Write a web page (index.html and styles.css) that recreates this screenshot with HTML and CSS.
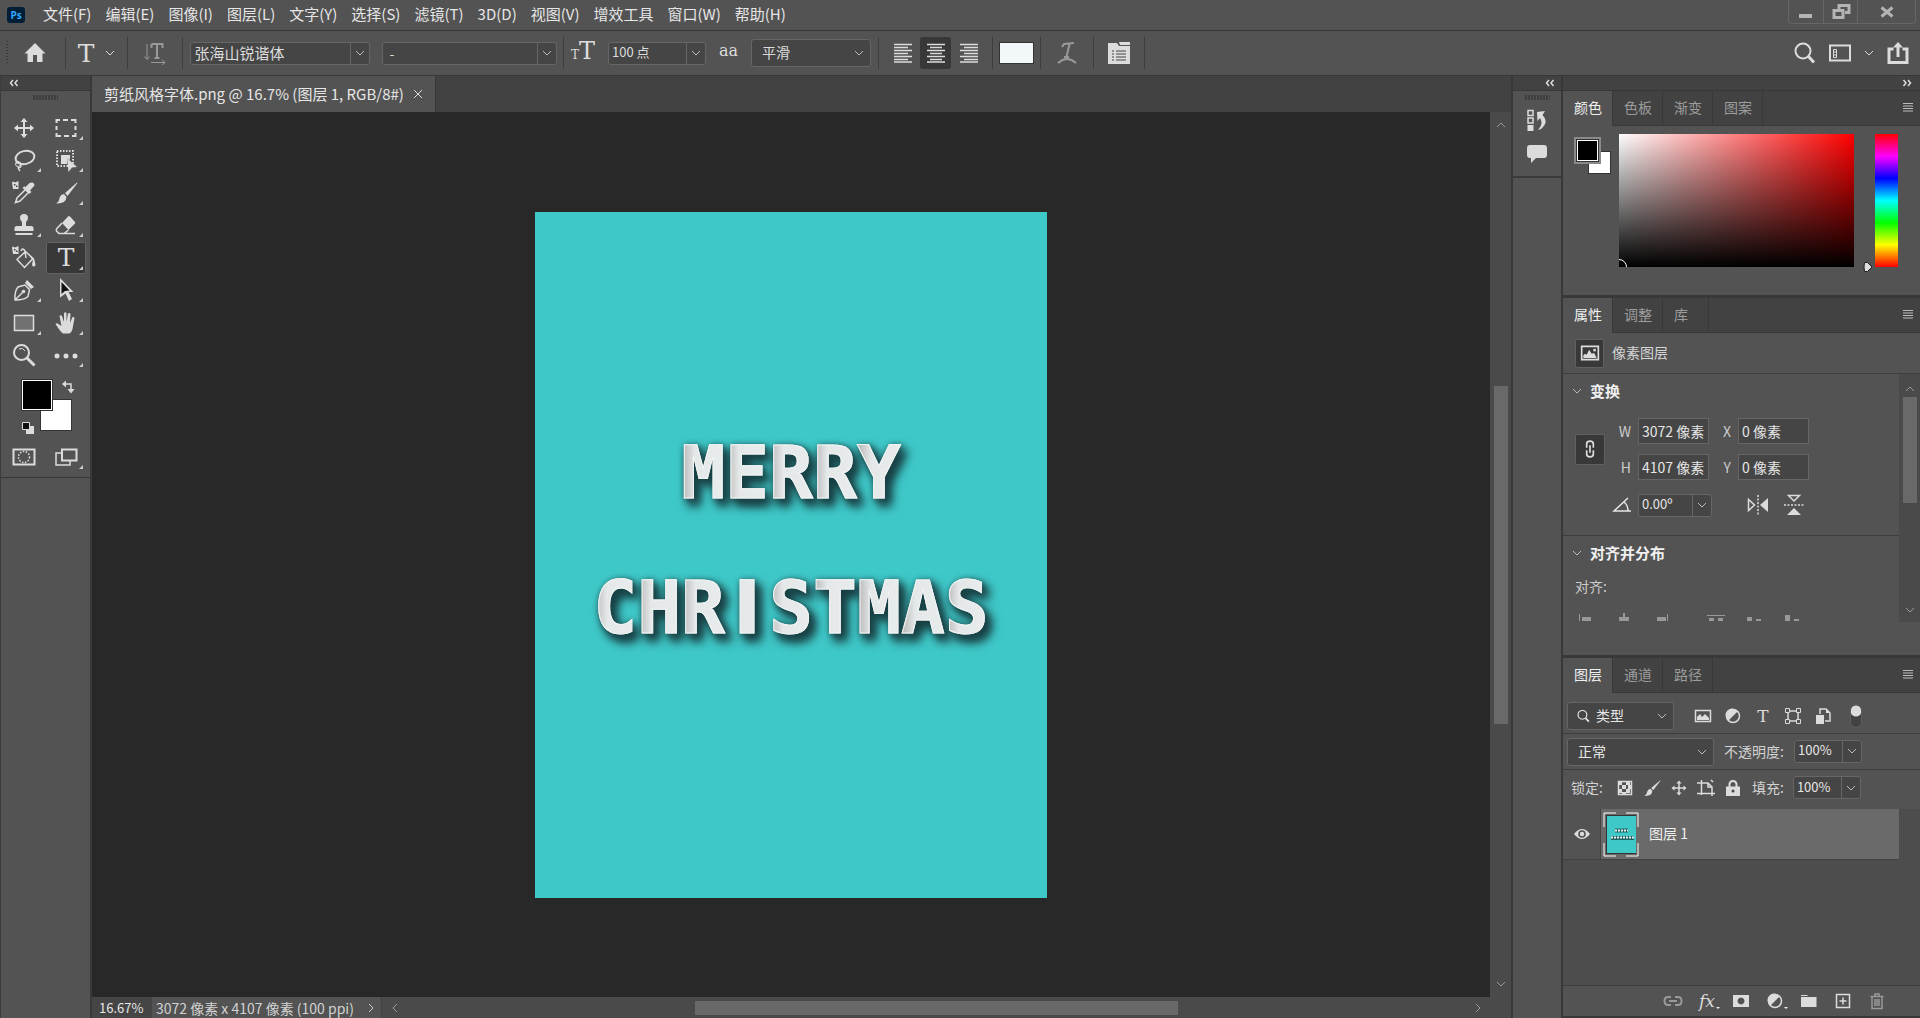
FILE: index.html
```html
<!DOCTYPE html>
<html lang="zh-CN">
<head>
  <meta charset="UTF-8"/>
  <meta name="viewport" content="width=device-width,initial-scale=1.0"/>
  <title>剪纸风格字体.png</title>
  <link rel="stylesheet" href="styles.css">
</head>
<body>
<svg class="sprite" aria-hidden="true">
  <symbol id="i-down" viewBox="0 0 10 10"><path d="M1 3l4 4 4-4" class="ln"/></symbol>
  <symbol id="i-up" viewBox="0 0 10 10"><path d="M1 7l4-4 4 4" class="ln"/></symbol>
  <symbol id="i-left" viewBox="0 0 10 10"><path d="M7 1L3 5l4 4" class="ln"/></symbol>
  <symbol id="i-right" viewBox="0 0 10 10"><path d="M3 1l4 4-4 4" class="ln"/></symbol>
  <symbol id="i-collapse" viewBox="0 0 10 10"><path d="M4 2L1.500 5 4 8M8.500 2L6 5l2.500 3" class="ln ln-bold"/></symbol>
  <symbol id="i-expand" viewBox="0 0 10 10"><path d="M1.500 2L4 5 1.500 8M6 2l2.500 3L6 8" class="ln ln-bold"/></symbol>
  <symbol id="i-close" viewBox="0 0 10 10"><path d="M1 1l8 8M9 1L1 9" class="ln"/></symbol>
  <symbol id="i-menu" viewBox="0 0 10 10"><path d="M0 1.500h10M0 4h10M0 6.500h10M0 9h10" class="ln"/></symbol>
  <symbol id="i-home" viewBox="0 0 24 24"><path d="M12 2L1.500 12.500H4.500V21h5.500v-7h4v7h5.500v-8.500h3z"/></symbol>
  <symbol id="i-orient" viewBox="0 0 24 24"><path d="M4 3v15M1.500 15.500L4 18.500l2.500-3M8 21.500h14M19 18.500l3 3-3 2.500" class="ln"/><path d="M8.500 3h11v4M8.500 7V3M14 3v14M11.500 17h5" class="ln ln-2"/></symbol>
  <symbol id="i-al-l" viewBox="0 0 20 20"><path d="M1 1.500h18M1 4.500h14M1 7.500h18M1 10.500h14M1 13.500h18M1 16.500h14M1 19h18" class="ln ln-bold"/></symbol>
  <symbol id="i-al-c" viewBox="0 0 20 20"><path d="M1 1.500h18M4 4.500h12M1 7.500h18M4 10.500h12M1 13.500h18M4 16.500h12M1 19h18" class="ln ln-bold"/></symbol>
  <symbol id="i-al-r" viewBox="0 0 20 20"><path d="M1 1.500h18M5 4.500h14M1 7.500h18M5 10.500h14M1 13.500h18M5 16.500h14M1 19h18" class="ln ln-bold"/></symbol>
  <symbol id="i-warp" viewBox="0 0 24 24"><path d="M7 6l2-3 10-1M14.500 3l-3 13M9 16h5" class="ln ln-2"/><path d="M3 22q9-8 18 0" class="ln ln-2"/></symbol>
  <symbol id="i-panel" viewBox="0 0 24 24"><path d="M1 2h9l2 3h11v18H1zM12 1h11v3H13z"/><path d="M5 10h2M9 10h10M5 13h2M9 13h10M5 16h2M9 16h10M5 19h2M9 19h10" stroke="#444" fill="none"/></symbol>
  <symbol id="i-search" viewBox="0 0 24 24"><circle cx="11" cy="10" r="7.500" class="ln ln-2"/><path d="M16.500 15.500l5.500 6" class="ln ln-3"/></symbol>
  <symbol id="i-work" viewBox="0 0 24 24"><path d="M2 4.500h20v15H2z" class="ln ln-2"/><path d="M5.500 8.500h3v8h-3zM5.500 11h3M5.500 14h3" class="ln"/></symbol>
  <symbol id="i-share" viewBox="0 0 24 24"><path d="M7.500 8H3v13.500h18V8h-4.500" class="ln ln-3"/><path d="M12 16V4" class="ln ln-3"/><path d="M7 6.500L12 1l5 5.500z"/></symbol>

  <symbol id="i-move" viewBox="0 0 24 24"><path d="M12 4v16M4 12h16" class="ln ln-2"/><path d="M12 2l3.500 4h-7zM12 22l3.500-4h-7zM2 12l4-3.500v7zM22 12l-4-3.500v7z"/></symbol>
  <symbol id="i-marquee" viewBox="0 0 24 24"><path d="M2.500 7V4H6M9 4h5M17 4h4.500v3M21.500 10v4M21.500 17v3H18M15 20h-5M7 20H2.500v-3M2.500 14v-4" class="ln ln-2"/></symbol>
  <symbol id="i-lasso" viewBox="0 0 24 24"><ellipse cx="13" cy="9.500" rx="9.500" ry="6.500" transform="rotate(-12 13 9.500)" class="ln ln-2"/><circle cx="6" cy="16" r="2.500" class="ln"/><path d="M4 15q5-1 5 2t-2 2.500 1 3.500" class="ln ln-bold"/></symbol>
  <symbol id="i-object" viewBox="0 0 24 24"><path d="M3 3h16v15H3z" class="ln ln-2" stroke-dasharray="1.500 1.500"/><path d="M7 7h9v5l-3-2v6H7zM13 10l10 9-5 .5L14.500 24z"/></symbol>
  <symbol id="i-dropper" viewBox="0 0 24 24"><path d="M13 6.500L17.500 2q4.500-2 5 2.500L18 9.500l1.500 1.500-2.500 2L10.500 7l2-2z"/><path d="M13 9l-8 8-1.500 4.500L8 20l8-8" class="ln ln-bold"/><path d="M0 1.500l1-1 2 1 3.500-1.500v8H1z"/><path d="M2 3h1.500v1.500H2zM4 4.500h1.500V6H4z" fill="#444"/></symbol>
  <symbol id="i-brush" viewBox="0 0 24 24"><path d="M23 1.500L11 12l2.500 3L23.500 2zM10 13l2.500 3q-.5 7-10.500 6.500 3-1.500 3.500-5.500 1-3.500 4.500-4z"/></symbol>
  <symbol id="i-stamp" viewBox="0 0 24 24"><path d="M12 1a4 4 0 0 1 4 4q0 2-2 4v4h5q2.500 0 2.500 2v3h-19v-3q0-2 2.500-2h5V9Q8 7 8 5a4 4 0 0 1 4-4zM3.500 20h17v2h-17z"/></symbol>
  <symbol id="i-eraser" viewBox="0 0 24 24"><path d="M14 3.500q1-1 2 0L21 9q.5 1 0 1.500L14.500 17 8 10z"/><path d="M8 10l-5.500 6q-.5 1 0 2l2.500 2.500h5L14.500 17M10 20.500h11" class="ln ln-bold"/></symbol>
  <symbol id="i-bucket" viewBox="0 0 24 24"><path d="M5 13.500l8.500-8 7.500 7-8.500 9zM9 5q1.500-4 4 0l1 7" class="ln ln-bold"/><path d="M17 9q6 2 6.500 10-1 2.500-3 1-1-2 .5-5zM0 1.500l1-1 2 1 3.500-1.500v8H1z"/><path d="M2 3h1.500v1.500H2zM4 4.500h1.500V6H4z" fill="#444"/></symbol>
  <symbol id="i-pen" viewBox="0 0 24 24"><path d="M3 22q-.5-9 3-13l7-2 4.500 4.500-1.500 7Q12.500 22 3 22zM3.500 21.500l7-7" class="ln ln-bold"/><circle cx="11.500" cy="13.500" r="1.800"/><path d="M15 2l7 7-3 2-6-6z"/></symbol>
  <symbol id="i-select" viewBox="0 0 24 24"><path d="M6 0l13.500 14h-5l3.500 7-3 2-3.500-7.500-5.500 4z"/><path d="M7.500 4l8 8.500-4.500.5-3.500 3z" fill="#111"/></symbol>
  <symbol id="i-rect" viewBox="0 0 24 24"><path d="M2.500 4.500h19v15h-19z" fill="#717171" stroke="currentColor" stroke-width="1.500"/></symbol>
  <symbol id="i-hand" viewBox="0 0 24 24"><path d="M9 22.500q-2-1-7.500-9.500 1-1.500 3 0l3 2L5.500 5Q7 3.500 8 5l2 6V2q1.500-1.500 2.500 0v9L14 2.500q1.500-1 2.500 .5l-.5 9 2.500-6q1.500-.5 2 1L18.500 18q-1 3.500-3 4.500z"/></symbol>
  <symbol id="i-zoom" viewBox="0 0 24 24"><circle cx="9.500" cy="9.500" r="7.500" class="ln ln-2"/><path d="M15 15l7.500 7.500" class="ln ln-3"/><path d="M7 6q4-2 6 2" class="ln"/></symbol>
  <symbol id="i-more" viewBox="0 0 24 24"><circle cx="3" cy="13" r="2.500"/><circle cx="12" cy="13" r="2.500"/><circle cx="21" cy="13" r="2.500"/></symbol>
  <symbol id="i-swap" viewBox="0 0 14 14"><path d="M4 4h6v6" class="ln ln-bold"/><path d="M1 4l4-3.500v7zM10 13.500L6.500 9h7z"/></symbol>
  <symbol id="i-default" viewBox="0 0 14 14"><path d="M6 5h7v8H5V9h1z"/><path d="M1.500 1.500h7v7h-7z" fill="#111" stroke="currentColor"/></symbol>
  <symbol id="i-mask" viewBox="0 0 24 24"><path d="M1.500 4.500h21v15h-21z" class="ln ln-2"/><circle cx="12" cy="12" r="5.500" class="ln ln-bold" stroke-dasharray="1.500 1.500"/></symbol>
  <symbol id="i-screen" viewBox="0 0 24 24"><path d="M8 8H2v12h14v-4" class="ln ln-bold"/><path d="M8 4.500h14.500v11H8z" class="ln ln-2"/></symbol>

  <symbol id="i-history" viewBox="0 0 24 24"><path d="M3 1.500h5v5H3zM3 9h5v5H3z" class="ln ln-bold"/><path d="M2.500 16h6v6h-6zM12 3l8-1-2.500 4q7 7-1.500 14l-3 1q6-6 2-12l-2.500 3z"/></symbol>
  <symbol id="i-comment" viewBox="0 0 24 24"><path d="M5 3h14q3 0 3 3v7q0 3-3 3h-8l-5 5v-5H5q-3 0-3-3V6q0-3 3-3z"/></symbol>
  <symbol id="i-image" viewBox="0 0 24 24"><path d="M2 4h20v16H2z" class="ln ln-2"/><path d="M4 18v-3l2-2 2 1 3-6 3 5 3-1 3 6z"/><path d="M16 7h3v3h-3z"/></symbol>
  <symbol id="i-link" viewBox="0 0 24 24"><path d="M9 9.500H8V6q0-3.500 4-3.500T16 6v3.500h-1M9 14.500H8V18q0 3.500 4 3.500t4-3.500v-3.500h-1M12 7.500v9" class="ln ln-2"/></symbol>
  <symbol id="i-angle" viewBox="0 0 20 16"><path d="M16 1L2 14h17M12 5q4 3 4 9" class="ln ln-bold"/></symbol>
  <symbol id="i-fliph" viewBox="0 0 24 24"><path d="M2.500 6.500v11l6-5.500z" class="ln ln-bold"/><path d="M22 5v14l-8-7z"/><path d="M12 2v20" class="ln ln-bold" stroke-dasharray="2 1.500"/></symbol>
  <symbol id="i-flipv" viewBox="0 0 24 24"><path d="M6.500 2.500h11L12 8z" class="ln ln-bold"/><path d="M5 22h14l-7-7z"/><path d="M2 12h20" class="ln ln-bold" stroke-dasharray="2 1.500"/></symbol>
  <symbol id="i-obj-l" viewBox="0 0 18 8"><path d="M2 1h1v7H2zM5 4h9v4H5z"/></symbol>
  <symbol id="i-obj-c" viewBox="0 0 18 8"><path d="M8 0h2v4h4v4H4V4h4z"/></symbol>
  <symbol id="i-obj-r" viewBox="0 0 18 8"><path d="M14 1h1v7h-1zM4 4h9v4H4z"/></symbol>
  <symbol id="i-obj-t" viewBox="0 0 18 8"><path d="M0 2h18v1H0zM2 5h5v3H2zM11 5h5v3h-5z"/></symbol>
  <symbol id="i-obj-m" viewBox="0 0 18 8"><path d="M2 4h5v4H2zM11 6h5v2h-5z"/></symbol>
  <symbol id="i-obj-b" viewBox="0 0 18 8"><path d="M2 2h5v6H2zM11 6h5v2h-5z"/></symbol>
  <symbol id="i-pic" viewBox="0 0 18 18"><path d="M1.500 3.500h15v11h-15z" class="ln ln-bold"/><path d="M3 13v-3l3-3 2 3 3-3 4 4v2z"/></symbol>
  <symbol id="i-adjust" viewBox="0 0 18 18"><circle cx="9" cy="9" r="6.500" class="ln ln-bold"/><path d="M13.500 4.500A6.500 6.500 0 1 0 4.500 13.500z"/></symbol>
  <symbol id="i-shape" viewBox="0 0 18 18"><path d="M4 4h10v10H4z" class="ln ln-bold"/><path d="M1.500 1.500h4v4h-4zM12.500 1.500h4v4h-4zM1.500 12.500h4v4h-4zM12.500 12.500h4v4h-4z" fill="#535353" stroke="currentColor"/></symbol>
  <symbol id="i-smart" viewBox="0 0 18 18"><path d="M6 7V2h6l4 4v8h-5" class="ln ln-bold"/><path d="M12 2v4h4zM2 8h8v9H2z"/></symbol>
  <symbol id="i-checker" viewBox="0 0 18 18"><path d="M2.500 2.500h13v13h-13z" class="ln ln-bold"/><path d="M2 2h4v4H2zM10 2h4v4h-4zM6 6h4v4H6zM12 6h4v4h-4zM2 10h4v4H2zM10 10h4v4h-4zM6 13h4v3H6z"/></symbol>
  <symbol id="i-artboard" viewBox="0 0 18 18"><path d="M4.500 1v15M0 4h11l4 4v9M0 14.500h18M11 4v4h4M14 1l2 2" class="ln ln-bold"/></symbol>
  <symbol id="i-lock" viewBox="0 0 18 18"><path d="M5.500 8V5Q6 2 9 2t3.500 3v3" class="ln ln-2"/><path d="M2 7.500h14V17H2z"/><circle cx="9" cy="12" r="1.500" fill="#444"/></symbol>
  <symbol id="i-eye" viewBox="0 0 18 18"><path d="M1 9q8-10 16 0-8 10-16 0z"/><circle cx="9" cy="9" r="3.800" fill="#535353"/><circle cx="9" cy="9" r="2.200"/></symbol>
  <symbol id="i-chain" viewBox="0 0 20 18"><path d="M8 5H5q-3.500 0-3.500 4T5 13h3M12 5h3q3.500 0 3.500 4T15 13h-3M6 9h8" class="ln ln-2"/></symbol>
  <symbol id="i-addmask" viewBox="0 0 20 18"><path fill-rule="evenodd" d="M2 3h16v12H2zM10 5.500a3.500 3.500 0 1 0 .01 0z"/></symbol>
  <symbol id="i-folder" viewBox="0 0 20 18"><path d="M2 3h6l1 1H2zM2 5h15.500v10H2z"/></symbol>
  <symbol id="i-new" viewBox="0 0 20 18"><path d="M3.500 2.500h13v13h-13zM10 5.500v7M6.500 9h7" class="ln ln-bold"/></symbol>
  <symbol id="i-trash" viewBox="0 0 20 18"><path d="M3.500 4.500h13M5 5v11.500h10V5M8 4V2h4v2M8 7v7M10 7v7M12 7v7" class="ln ln-bold"/></symbol>
</svg>

<div class="app">
  <header class="menubar">
    <span class="logo">Ps</span>
    <nav class="menus">
      <button>文件(F)</button>
      <button>编辑(E)</button>
      <button>图像(I)</button>
      <button>图层(L)</button>
      <button>文字(Y)</button>
      <button>选择(S)</button>
      <button>滤镜(T)</button>
      <button>3D(D)</button>
      <button>视图(V)</button>
      <button>增效工具</button>
      <button>窗口(W)</button>
      <button>帮助(H)</button>
    </nav>
    <div class="winbtns">
      <button class="wb" aria-label="最小化"><svg viewBox="0 0 20 20"><path d="M3 12h13v4H3z"/></svg></button>
      <button class="wb" aria-label="还原"><svg viewBox="0 0 20 20"><path d="M8 7V3.500h10v7h-4M3 8.500h9v7H3z" class="ln ln-3"/></svg></button>
      <button class="wb wb-close" aria-label="关闭"><svg viewBox="0 0 20 20"><path d="M4.500 5.500l11 9M15.500 5.500l-11 9" class="ln ln-3"/></svg></button>
    </div>
  </header>

  <div class="options">
    <div class="grip-v"></div>
    <div class="og og-home"><button class="ib" aria-label="主页"><svg class="s24"><use href="#i-home"/></svg></button></div>
    <div class="og og-tool"><button class="ib glyph" aria-label="横排文字工具">T</button><button class="ib" aria-label="工具预设"><svg class="s10"><use href="#i-down"/></svg></button></div>
    <div class="og og-orient"><button class="ib off" aria-label="切换文本取向"><svg class="s24"><use href="#i-orient"/></svg></button></div>
    <div class="og og-font">
      <select class="sel sel-split sel-font" aria-label="字体"><option>张海山锐谐体</option></select>
      <select class="sel sel-split sel-style" aria-label="字体样式"><option>-</option></select>
    </div>
    <div class="og og-size">
      <span class="pair pair-size"><span>T</span><span>T</span></span>
      <div class="combo combo-size"><input value="100 点" aria-label="字体大小"><button aria-label="选择字体大小"><svg class="s10"><use href="#i-down"/></svg></button></div>
      <span class="pair pair-aa"><span>a</span><span>a</span></span>
      <select class="sel sel-tall sel-aa" aria-label="消除锯齿"><option>平滑</option></select>
    </div>
    <div class="og og-align">
      <button class="ib ib-box" aria-label="左对齐文本"><svg class="s20"><use href="#i-al-l"/></svg></button>
      <button class="ib ib-box on" aria-label="居中对齐文本"><svg class="s20"><use href="#i-al-c"/></svg></button>
      <button class="ib ib-box" aria-label="右对齐文本"><svg class="s20"><use href="#i-al-r"/></svg></button>
    </div>
    <div class="og og-color"><button class="textcolor" aria-label="文本颜色"></button></div>
    <div class="og og-warp"><button class="ib off" aria-label="变形文字"><svg class="s24"><use href="#i-warp"/></svg></button></div>
    <div class="og og-para"><button class="ib" aria-label="字符和段落面板"><svg class="s24"><use href="#i-panel"/></svg></button></div>
    <div class="opt-right">
      <button class="ib" aria-label="搜索"><svg class="s24"><use href="#i-search"/></svg></button>
      <button class="ib" aria-label="工作区"><svg class="s24"><use href="#i-work"/></svg></button>
      <button class="ib" aria-label="工作区菜单"><svg class="s10"><use href="#i-down"/></svg></button>
      <button class="ib" aria-label="共享"><svg class="s24"><use href="#i-share"/></svg></button>
    </div>
  </div>

  <div class="main">
    <aside class="tools">
      <div class="colhead"><svg class="s10"><use href="#i-collapse"/></svg></div>
      <div class="toolbox">
        <div class="grip"></div>
        <div class="toolgrid">
          <button aria-label="移动"><svg class="s24"><use href="#i-move"/></svg></button>
          <button class="sub" aria-label="矩形选框"><svg class="s24"><use href="#i-marquee"/></svg></button>
          <button class="sub" aria-label="套索"><svg class="s24"><use href="#i-lasso"/></svg></button>
          <button class="sub" aria-label="对象选择"><svg class="s24"><use href="#i-object"/></svg></button>
          <button aria-label="吸管"><svg class="s24"><use href="#i-dropper"/></svg></button>
          <button class="sub" aria-label="画笔"><svg class="s24"><use href="#i-brush"/></svg></button>
          <button class="sub" aria-label="仿制图章"><svg class="s24"><use href="#i-stamp"/></svg></button>
          <button class="sub" aria-label="橡皮擦"><svg class="s24"><use href="#i-eraser"/></svg></button>
          <button aria-label="油漆桶"><svg class="s24"><use href="#i-bucket"/></svg></button>
          <button class="sub on glyph" aria-label="横排文字">T</button>
          <button class="sub" aria-label="钢笔"><svg class="s24"><use href="#i-pen"/></svg></button>
          <button class="sub" aria-label="路径选择"><svg class="s24"><use href="#i-select"/></svg></button>
          <button class="sub" aria-label="矩形"><svg class="s24"><use href="#i-rect"/></svg></button>
          <button class="sub" aria-label="抓手"><svg class="s24"><use href="#i-hand"/></svg></button>
          <button aria-label="缩放"><svg class="s24"><use href="#i-zoom"/></svg></button>
          <button class="sub" aria-label="编辑工具栏"><svg class="s24"><use href="#i-more"/></svg></button>
        </div>
        <div class="swatches">
          <button class="sw sw-bg" aria-label="背景色"></button>
          <button class="sw sw-fg" aria-label="前景色"></button>
          <button class="ib sw-swap" aria-label="切换前景色和背景色"><svg class="s14"><use href="#i-swap"/></svg></button>
          <button class="ib sw-def" aria-label="默认前景色和背景色"><svg class="s14"><use href="#i-default"/></svg></button>
        </div>
        <div class="toolgrid toolgrid-end">
          <button aria-label="快速蒙版"><svg class="s24"><use href="#i-mask"/></svg></button>
          <button class="sub" aria-label="屏幕模式"><svg class="s24"><use href="#i-screen"/></svg></button>
        </div>
      </div>
    </aside>

    <main class="doc">
      <div class="doctabs">
        <div class="doctab">
          <span>剪纸风格字体.png @ 16.7% (图层 1, RGB/8#)</span>
          <button class="ib" aria-label="关闭文档"><svg class="s10"><use href="#i-close"/></svg></button>
        </div>
      </div>
      <div class="view">
        <div class="pasteboard">
          <div class="artboard">
            <div class="cutout">MERRY</div>
            <div class="cutout">CHR<span class="bar-i">I</span>STMAS</div>
          </div>
        </div>
        <div class="vscroll">
          <svg class="s10"><use href="#i-up"/></svg>
          <div class="track"><div class="thumb"></div></div>
          <svg class="s10"><use href="#i-down"/></svg>
        </div>
      </div>
      <footer class="status">
        <input class="zoom" value="16.67%" aria-label="缩放比例">
        <button class="info">3072 像素 x 4107 像素 (100 ppi)<svg class="s10"><use href="#i-right"/></svg></button>
        <div class="hscroll">
          <svg class="s10"><use href="#i-left"/></svg>
          <div class="track"><div class="thumb"></div></div>
          <svg class="s10"><use href="#i-right"/></svg>
        </div>
      </footer>
    </main>

    <div class="dock">
      <div class="colhead"><svg class="s10"><use href="#i-collapse"/></svg></div>
      <div class="dockicons">
        <div class="grip"></div>
        <button class="ib" aria-label="历史记录"><svg class="s24"><use href="#i-history"/></svg></button>
        <button class="ib" aria-label="注释"><svg class="s24"><use href="#i-comment"/></svg></button>
      </div>
    </div>

    <aside class="panels">
      <div class="colhead colhead-end"><svg class="s10"><use href="#i-expand"/></svg></div>

      <section class="panel">
        <div class="tabs">
          <button class="tab active">颜色</button><button class="tab">色板</button><button class="tab">渐变</button><button class="tab">图案</button>
          <button class="ib tabmenu" aria-label="颜色面板菜单"><svg class="s10"><use href="#i-menu"/></svg></button>
        </div>
        <div class="color">
          <div class="minisw"><button class="sw sw-bg" aria-label="设置背景色"></button><button class="sw sw-fg" aria-label="设置前景色"></button></div>
          <div class="field"><span class="picker"></span></div>
          <div class="hue"><svg class="huemark" viewBox="0 0 10 12"><path d="M1.500 1.500h3l4.500 4.500-4.500 4.500h-3q-1-4.500 0-9z" fill="#ddd" stroke="#222"/></svg></div>
        </div>
      </section>

      <section class="panel">
        <div class="tabs">
          <button class="tab active">属性</button><button class="tab">调整</button><button class="tab">库</button>
          <button class="ib tabmenu" aria-label="属性面板菜单"><svg class="s10"><use href="#i-menu"/></svg></button>
        </div>
        <div class="kind"><span class="boxicon"><svg class="s20"><use href="#i-image"/></svg></span><span class="up">像素图层</span></div>
        <div class="props">
          <div class="propbody">
            <div class="group">
              <h3><svg class="s10"><use href="#i-down"/></svg>变换</h3>
              <div class="transform">
                <button class="boxicon lock" aria-label="链接宽高"><svg class="s20"><use href="#i-link"/></svg></button>
                <label for="p-w">W</label><input id="p-w" value="3072 像素">
                <label for="p-x">X</label><input id="p-x" value="0 像素">
                <label for="p-h">H</label><input id="p-h" value="4107 像素">
                <label for="p-y">Y</label><input id="p-y" value="0 像素">
              </div>
              <div class="rotate">
                <svg class="angle"><use href="#i-angle"/></svg>
                <div class="combo combo-angle"><input value="0.00º" aria-label="旋转角度"><button aria-label="选择角度"><svg class="s10"><use href="#i-down"/></svg></button></div>
                <button class="ib flip" aria-label="水平翻转"><svg class="s24"><use href="#i-fliph"/></svg></button>
                <button class="ib" aria-label="垂直翻转"><svg class="s24"><use href="#i-flipv"/></svg></button>
              </div>
            </div>
            <div class="group group-last">
              <h3><svg class="s10"><use href="#i-down"/></svg>对齐并分布</h3>
              <p>对齐:</p>
              <div class="objalign">
                <button class="ib off" aria-label="左对齐"><svg><use href="#i-obj-l"/></svg></button>
                <button class="ib off" aria-label="水平居中对齐"><svg><use href="#i-obj-c"/></svg></button>
                <button class="ib off" aria-label="右对齐"><svg><use href="#i-obj-r"/></svg></button>
                <button class="ib off second" aria-label="顶对齐"><svg><use href="#i-obj-t"/></svg></button>
                <button class="ib off" aria-label="垂直居中对齐"><svg><use href="#i-obj-m"/></svg></button>
                <button class="ib off" aria-label="底对齐"><svg><use href="#i-obj-b"/></svg></button>
              </div>
            </div>
          </div>
          <div class="propscroll">
            <svg class="s10"><use href="#i-up"/></svg>
            <div class="thumb"></div>
            <svg class="s10 end"><use href="#i-down"/></svg>
          </div>
        </div>
      </section>

      <section class="panel layers">
        <div class="tabs">
          <button class="tab active">图层</button><button class="tab">通道</button><button class="tab">路径</button>
          <button class="ib tabmenu" aria-label="图层面板菜单"><svg class="s10"><use href="#i-menu"/></svg></button>
        </div>
        <div class="lrow lrow-filter">
          <div class="filter"><svg class="s14"><use href="#i-search"/></svg><select class="sel sel-tall" aria-label="图层过滤"><option>类型</option></select></div>
          <div class="kinds">
            <button class="ib" aria-label="像素图层过滤"><svg class="s18"><use href="#i-pic"/></svg></button>
            <button class="ib" aria-label="调整图层过滤"><svg class="s18"><use href="#i-adjust"/></svg></button>
            <button class="ib glyph glyph-sm" aria-label="文字图层过滤">T</button>
            <button class="ib" aria-label="形状图层过滤"><svg class="s18"><use href="#i-shape"/></svg></button>
            <button class="ib" aria-label="智能对象过滤"><svg class="s18"><use href="#i-smart"/></svg></button>
          </div>
          <input type="checkbox" class="toggle" aria-label="打开图层过滤" checked>
        </div>
        <div class="lrow lrow-mode">
          <select class="sel sel-tall sel-mode" aria-label="混合模式"><option>正常</option></select>
          <label for="l-op">不透明度:</label>
          <div class="combo combo-pct"><input id="l-op" value="100%"><button aria-label="调整不透明度"><svg class="s10"><use href="#i-down"/></svg></button></div>
        </div>
        <div class="lrow lrow-lock">
          <span>锁定:</span>
          <div class="locks">
            <button class="ib" aria-label="锁定透明像素"><svg class="s18"><use href="#i-checker"/></svg></button>
            <button class="ib" aria-label="锁定图像像素"><svg class="s18"><use href="#i-brush"/></svg></button>
            <button class="ib" aria-label="锁定位置"><svg class="s18"><use href="#i-move"/></svg></button>
            <button class="ib" aria-label="防止自动嵌套"><svg class="s18"><use href="#i-artboard"/></svg></button>
            <button class="ib" aria-label="锁定全部"><svg class="s18"><use href="#i-lock"/></svg></button>
          </div>
          <label for="l-fill">填充:</label>
          <div class="combo combo-pct"><input id="l-fill" value="100%"><button aria-label="调整填充"><svg class="s10"><use href="#i-down"/></svg></button></div>
        </div>
        <div class="layerlist">
          <div class="layer">
            <button class="ib vis" aria-label="图层可见性"><svg class="s18"><use href="#i-eye"/></svg></button>
            <div class="layerbody">
              <span class="thumbframe"><svg viewBox="0 0 36 45">
                <path d="M13 1H1v14M23 1h12v14M1 31v13h12M35 31v13H23" stroke="#fff" fill="none"/>
                <path d="M3 3h30v39H3z" fill="#333"/>
                <path d="M4 4h29v37H4z" fill="#3fc8c8"/>
                <path d="M12 18.500h13M8 26h23" stroke="#1d6666" stroke-width="4"/>
                <path d="M12 18.500h13M8 25.500h23" stroke="#eee" stroke-width="2" stroke-dasharray="2 1"/>
              </svg></span>
              <span class="up">图层 1</span>
            </div>
          </div>
        </div>
        <div class="layerfoot">
          <button class="ib off" aria-label="链接图层"><svg><use href="#i-chain"/></svg></button>
          <button class="ib fx" aria-label="添加图层样式">fx</button>
          <button class="ib" aria-label="添加图层蒙版"><svg><use href="#i-addmask"/></svg></button>
          <button class="ib dot" aria-label="创建调整图层"><svg><use href="#i-adjust"/></svg></button>
          <button class="ib" aria-label="创建新组"><svg><use href="#i-folder"/></svg></button>
          <button class="ib" aria-label="创建新图层"><svg><use href="#i-new"/></svg></button>
          <button class="ib off" aria-label="删除图层"><svg><use href="#i-trash"/></svg></button>
        </div>
      </section>
    </aside>
  </div>
</div>
</body>
</html>
```
FILE: styles.css
```css
* { box-sizing:border-box; }
body { margin:0; background:#535353; color:#e6e6e6; font:14px/20px "Noto Sans CJK SC",sans-serif; }
button, input, select { font:inherit; color:inherit; margin:0; }
button { background:none; border:0; padding:0; cursor:pointer; }
svg { display:block; fill:currentColor; flex:none; }
.sprite { display:none; }
.ln { fill:none; stroke:currentColor; stroke-width:1; }
.ln-bold { stroke-width:1.5; }
.ln-2 { stroke-width:2; }
.ln-3 { stroke-width:3; }
.s10 { width:10px; height:10px; }
.s14 { width:14px; height:14px; }
.s18 { width:18px; height:18px; }
.s20 { width:20px; height:20px; }
.s24 { width:24px; height:24px; }
.up { padding-bottom:3px; }

.app { display:flex; flex-direction:column; height:100vh; overflow:hidden; }

/* menu bar */
.menubar { display:flex; height:31px; border-bottom:1px solid #383838; align-items:center; }
.logo { width:18px; height:16px; margin-left:7px; border-radius:3px; background:#001e36; color:#31a8ff; font:bold 10px/16px "Open Sans",sans-serif; text-align:center; }
.menus { display:flex; gap:14px; margin-left:18px; padding-bottom:2px; flex:1; font-size:15px; white-space:nowrap; }
.winbtns { display:flex; align-self:flex-start; margin-right:4px; border:1px solid #666; border-top:0; border-radius:0 0 4px 4px; height:24px; color:#b4b4b4; }
.wb { width:34px; display:flex; align-items:center; justify-content:center; }
.wb + .wb { border-left:1px solid #666; }
.wb svg { width:20px; height:20px; }
.wb.wb-close { width:58px; }

/* options bar */
.options { display:flex; height:45px; align-items:center; border-bottom:1px solid #383838; color:#dcdcdc; }
.grip-v { width:2px; height:24px; margin:0 0 0 6px; background:repeating-linear-gradient(#3a3a3a 0 1px,transparent 1px 3px); }
.og { display:flex; align-items:center; justify-content:center; height:32px; border-right:1px solid #3e3e3e; }
.og-home { width:58px; padding-right:4px; }
.og-tool { width:62px; gap:11px; }
.og-orient { width:55px; }
.og-font { width:381px; gap:12px; }
.og-size { width:315px; gap:13px; }
.og-align { width:114px; gap:2px; }
.og-color { width:48px; }
.og-warp { width:53px; }
.og-para { width:51px; }
.ib { display:flex; align-items:center; justify-content:center; color:#dcdcdc; }
.off { color:#999; }
.ib-box { width:31px; height:32px; border:1px solid transparent; border-radius:3px; }
.on { background:#383838; }
.glyph { font-family:"DejaVu Serif",serif; font-size:25px; line-height:25px; }
.glyph-sm { width:18px; font-size:17px; line-height:18px; }
.pair { display:flex; align-items:baseline; font-family:"DejaVu Serif",serif; line-height:24px; }
.pair-size { font-size:24px; }
.pair-size span:first-child { font-size:12px; }
.pair-aa { font-size:16px; }
.pair-aa span:first-child { padding-bottom:5px; align-self:flex-end; }
.textcolor { width:35px; height:22px; background:#f2f8fa; border:1px solid #333; }
.opt-right { display:flex; align-items:center; gap:12px; margin-left:auto; margin-right:10px; }

.sel { appearance:none; height:23px; padding:0 24px 0 10px; border:1px solid #666; border-radius:3px; background-color:#454545; background-repeat:no-repeat; background-position:right 6px center; background-image:url("data:image/svg+xml,%3Csvg xmlns='http://www.w3.org/2000/svg' width='10' height='10'%3E%3Cpath d='M1 3l4 4 4-4' fill='none' stroke='%23bbb'/%3E%3C/svg%3E"); line-height:20px; outline:0; }
.sel-split { padding-left:4px; background-position:right 4px center,right 18px top; background-size:auto,1px 100%; background-image:url("data:image/svg+xml,%3Csvg xmlns='http://www.w3.org/2000/svg' width='10' height='10'%3E%3Cpath d='M1 3l4 4 4-4' fill='none' stroke='%23bbb'/%3E%3C/svg%3E"),linear-gradient(#666,#666); }
.sel-font { width:180px; font-size:15px; padding-bottom:2px; }
.sel-style { width:175px; padding-left:7px; }
.sel-tall { height:28px; padding-bottom:2px; }
.sel-aa { width:120px; }
.combo { display:flex; height:23px; border:1px solid #666; border-radius:3px; background:#454545; }
.combo input { flex:1; min-width:0; border:0; background:none; padding:0 0 2px 3px; outline:0; font-size:13px; }
.combo button { width:19px; border-left:1px solid #666; display:flex; align-items:center; justify-content:center; color:#bbb; }
.combo-size { width:98px; }

.main { display:flex; flex:1; min-height:0; background:#383838; gap:2px; }
.colhead { height:15px; background:#424242; border-bottom:1px solid #383838; display:flex; align-items:center; padding-left:8px; color:#ddd; }
.colhead-end { justify-content:flex-end; padding-right:8px; }
.grip { width:25px; height:5px; margin:0 auto; background:repeating-linear-gradient(90deg,#3e3e3e 0 2px,transparent 2px 3px); }

/* toolbar */
.tools { width:90px; background:#535353; border-left:1px solid #3c3c3c; }
.toolbox { padding:4px 3px; border-bottom:1px solid #383838; color:#dcdcdc; }
.toolgrid { display:grid; grid-template-columns:40px 40px; gap:1px 2px; grid-auto-rows:1fr; height:259px; margin-top:12px; }
.toolgrid button { display:flex; align-items:center; justify-content:center; position:relative; color:#dcdcdc; border-radius:2px; }
.toolgrid .sub::after { content:""; position:absolute; right:3px; bottom:4px; border:2px solid transparent; border-right-color:#ccc; border-bottom-color:#ccc; }
.toolgrid .on { box-shadow:inset 0 0 0 1px #626262; }
.toolgrid.toolgrid-end { height:32px; margin-top:4px; }
.swatches { position:relative; height:60px; margin-top:6px; }
.sw { position:absolute; border:1px solid #333; }
.sw-bg { background:#fff; }
.sw-fg { background:#000; box-shadow:inset 0 0 0 1px #fff; }
.swatches .sw { width:32px; height:32px; }
.swatches .sw-fg { left:17px; top:2px; }
.swatches .sw-bg { left:36px; top:22px; }
.sw-swap { position:absolute; left:57px; top:3px; }
.sw-def { position:absolute; left:17px; top:44px; }

/* document */
.doc { flex:1; min-width:0; display:flex; flex-direction:column; }
.doctabs { display:flex; height:36px; background:#424242; }
.doctab { display:flex; align-items:center; gap:9px; padding:0 12px; background:#535353; border-right:1px solid #383838; font-size:15px; white-space:nowrap; }
.doctab span { padding-bottom:1px; }
.view { flex:1; min-height:0; display:flex; }
.pasteboard { flex:1; display:flex; align-items:center; justify-content:center; background:#282828; overflow:hidden; }
.artboard { flex:none; width:512px; height:686px; background:#3fc8c8; display:flex; flex-direction:column; align-items:center; justify-content:center; padding-bottom:30px; }
.cutout { font:bold 73px/135px "DejaVu Sans Mono",monospace; color:transparent; background:repeating-linear-gradient(90deg,#b4b2b3 0,#e4e8e8 14px,#e8ecec 44px); background-clip:text; -webkit-background-clip:text; -webkit-text-stroke:1px #f2f4f4; filter:drop-shadow(5px 6px 5px #173c40) drop-shadow(1px 1px 3px #1d5054); }
.bar-i { display:inline-block; width:44px; text-align:center; font-family:"DejaVu Sans",sans-serif; line-height:1; }
.track { flex:1; display:flex; }
.thumb { background:#696969; }
.vscroll { width:21px; background:#4a4a4a; display:flex; flex-direction:column; align-items:center; padding:8px 0; color:#999; }
.vscroll .track { flex-direction:column; padding:256px 0 255px; }
.vscroll .thumb { width:14px; flex:1; }
.status { display:flex; height:21px; background:#4a4a4a; line-height:20px; }
.zoom { width:60px; border:0; background:#454545; font-size:13px; padding:0 0 0 7px; outline:0; }
.info { display:flex; align-items:center; justify-content:space-between; width:230px; padding:0 5px 0 4px; background:#535353; border-right:1px solid #424242; color:#d2d2d2; white-space:nowrap; }
.hscroll { flex:1; display:flex; align-items:center; padding:0 28px 0 8px; color:#999; }
.hscroll .track { padding:0 27%; }
.hscroll .thumb { flex:1; height:14px; }

/* icon dock */
.dock { width:48px; background:#535353; }
.dock .colhead { padding-left:32px; }
.dockicons { display:flex; flex-direction:column; align-items:center; gap:9px; padding:4px 0 10px; border-bottom:2px solid #3a3a3a; }

/* panels */
.panels { width:357px; display:flex; flex-direction:column; }
.panel { background:#535353; margin-bottom:3px; }
.tabs { display:flex; height:35px; background:#424242; border-bottom:1px solid #383838; }
.tab { min-width:46px; padding:0 10px 3px 11px; color:#9c9c9c; border-right:1px solid #383838; text-align:left; }
.tab.active { background:#535353; color:#f0f0f0; margin-bottom:-1px; }
.tabmenu { margin-left:auto; padding:0 7px 2px 0; color:#bbb; }

.color { display:flex; padding:8px 22px 28px 11px; height:169px; }
.minisw { position:relative; width:45px; }
.minisw .sw { width:23px; height:23px; }
.minisw .sw-fg { left:2px; top:5px; outline:2px solid #8a8a8a; }
.minisw .sw-bg { left:14px; top:17px; }
.field { flex:1; position:relative; overflow:hidden; background:linear-gradient(transparent,#000),linear-gradient(90deg,#fff,#f00); }
.picker { position:absolute; left:-8px; bottom:-8px; width:16px; height:16px; border:1px solid #fff; border-radius:50%; }
.hue { position:relative; width:23px; margin-left:21px; background:linear-gradient(#f00,#f0f,#00f,#0ff,#0f0,#ff0,#f00); }
.huemark { position:absolute; left:-12px; bottom:-6px; width:10px; height:12px; }

.kind { display:flex; align-items:center; gap:8px; height:41px; padding-left:12px; border-bottom:1px solid #3e3e3e; color:#d6d6d6; }
.boxicon { display:flex; align-items:center; justify-content:center; width:29px; height:29px; background:#383838; border:1px solid #606060; border-radius:2px; color:#dcdcdc; }
.props { display:flex; height:248px; margin-bottom:33px; overflow:hidden; }
.propbody { flex:1; overflow:hidden; }
.group { border-bottom:1px solid #3e3e3e; height:162px; padding:7px 9px 0; }
.group-last { border:0; height:auto; }
.group h3 { display:flex; align-items:center; gap:8px; margin:0; font-size:15px; color:#f0f0f0; }
.group h3 svg { color:#bbb; }
.group p { margin:13px 0 0 3px; color:#ccc; }
.transform { display:grid; grid-template-columns:30px 19px 71px 15px 71px; grid-template-rows:26px 26px; gap:10px 7px; align-items:center; padding:17px 0 0 3px; justify-content:start; }
.transform label { text-align:right; color:#ccc; }
.transform input { width:71px; height:26px; background:#454545; border:1px solid #666; padding:0 2px 1px 3px; outline:0; }
.transform .lock { grid-row:1 / 3; width:30px; height:31px; }
.rotate { display:flex; align-items:center; margin:13px 0 0 40px; }
.angle { width:20px; height:16px; }
.combo-angle { width:74px; margin-left:6px; }
.flip { margin:0 12px 0 34px; }
.objalign { display:flex; gap:20px; margin:17px 0 0 5px; overflow:hidden; height:8px; }
.objalign svg { width:18px; height:8px; }
.objalign .second { margin-left:16px; }
.propscroll { width:21px; background:#4a4a4a; display:flex; flex-direction:column; align-items:center; color:#999; padding:10px 0 7px; }
.propscroll .thumb { width:14px; height:106px; margin-top:3px; }
.propscroll .end { margin-top:auto; }

/* layers */
.layers { flex:1; min-height:0; display:flex; flex-direction:column; margin-bottom:2px; }
.lrow { display:flex; align-items:center; height:36px; padding-left:4px; border-bottom:1px solid #3e3e3e; white-space:nowrap; }
.lrow-filter { height:41px; padding-top:5px; }
.lrow-lock { height:39px; padding:0 0 3px 8px; border:0; }
.lrow label, .lrow > span { color:#d2d2d2; padding-bottom:2px; }
.filter { position:relative; }
.filter svg { position:absolute; left:9px; top:7px; }
.filter .sel { width:107px; padding-left:28px; }
.kinds { display:flex; gap:12px; margin-left:20px; }
.toggle { appearance:none; width:12px; height:24px; margin:0 0 0 18px; border-radius:6px; background:radial-gradient(circle at 5px 6px,#dcdcdc 5px,#424242 6px); border:1px solid #5d5d5d; }
.sel-mode { width:147px; margin-right:10px; }
.lrow-mode .combo, .lrow-lock .combo { margin-bottom:1px; }
.combo-pct { width:68px; }
.lrow label { width:70px; }
.locks { display:flex; gap:9px; margin-left:13px; flex:none; }
.lrow.lrow-lock label { width:41px; margin-left:10px; }
.layerlist { flex:1; background:#4d4d4d; }
.layer { display:flex; height:51px; margin-right:21px; border-bottom:1px solid #424242; }
.vis { width:38px; background:#535353; border-right:1px solid #424242; }
.layerbody { flex:1; display:flex; align-items:center; gap:10px; padding-left:2px; background:#6a6a6a; color:#f0f0f0; }
.thumbframe svg { width:36px; height:45px; }
.layerfoot { display:flex; justify-content:flex-end; gap:14px; height:31px; padding-right:33px; border-top:1px solid #3e3e3e; }
.layerfoot svg { width:20px; height:18px; }
.fx { width:20px; font:italic 17px/18px "DejaVu Serif",serif; }
.fx, .dot { position:relative; }
.fx::after, .dot::after { content:""; position:absolute; right:-3px; bottom:5px; border:2px solid transparent; border-top-color:#eee; }
```
